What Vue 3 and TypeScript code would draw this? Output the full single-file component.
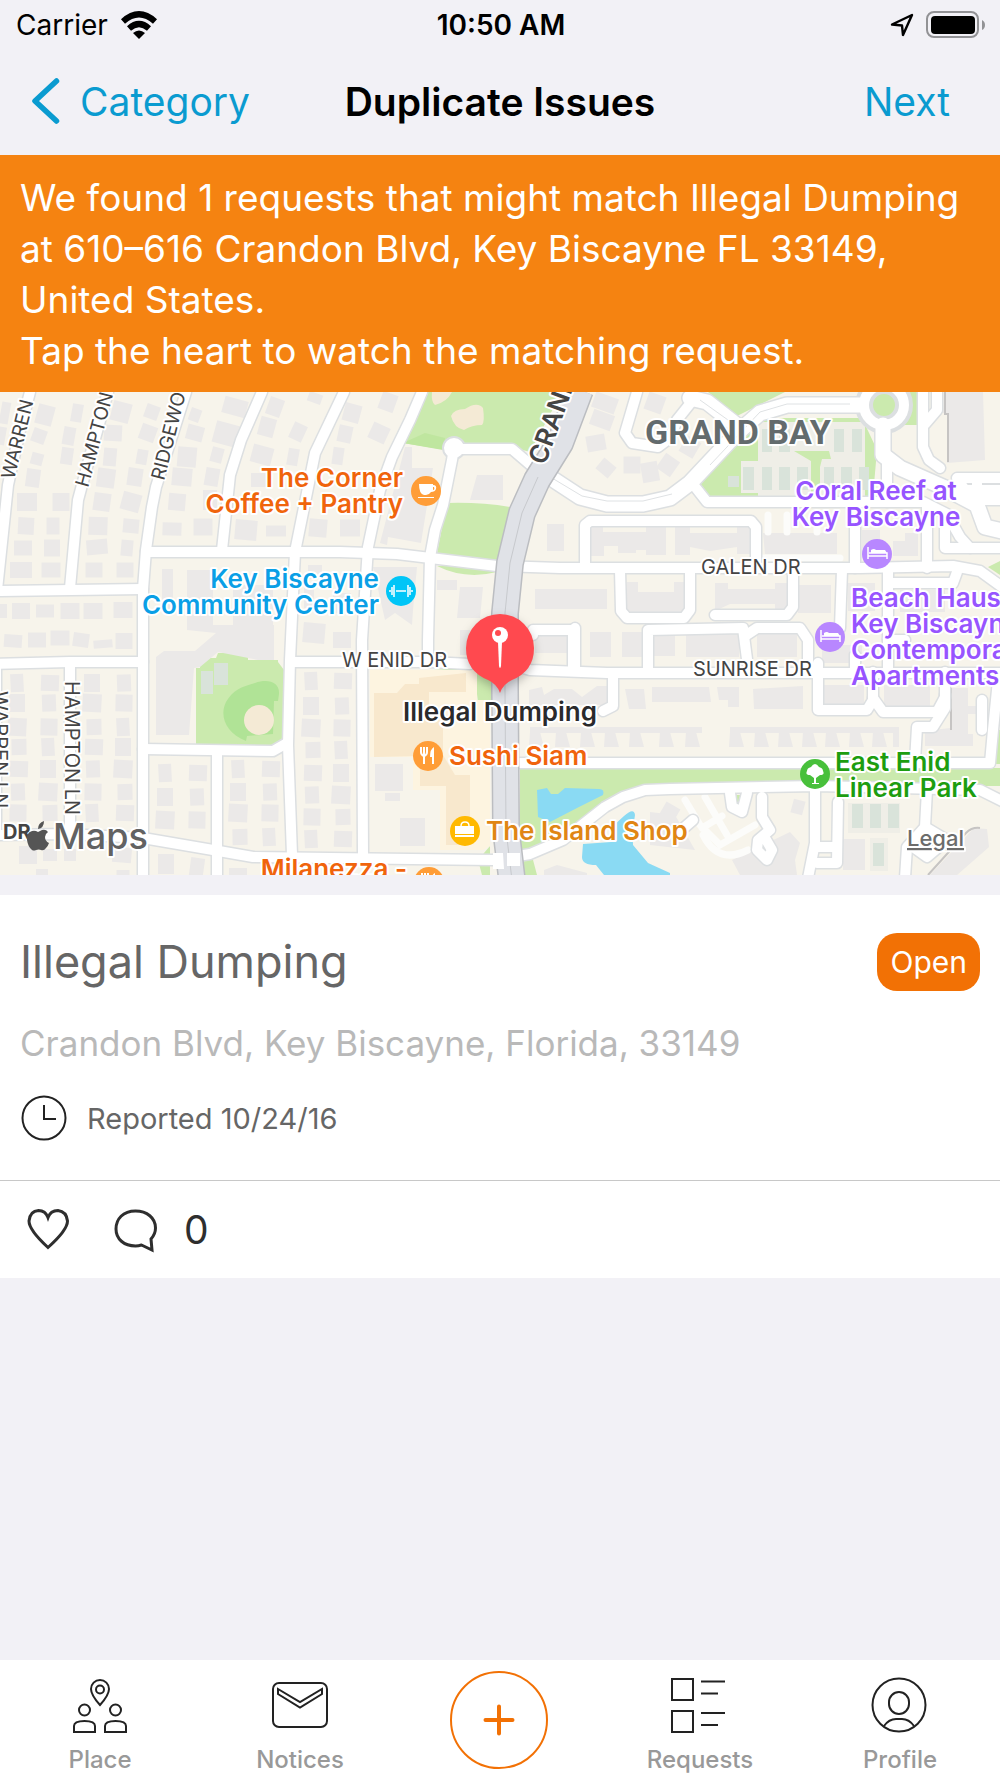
<script setup lang="ts">
import { ref } from 'vue'

type House = [x: number, y: number, w: number, h: number, tilt: number]

interface PlaceLabel {
  lines: string[]
  x: number
  y: number
  anchor: 'start' | 'middle' | 'end'
  kind: string
}

const watching = ref(false)

// Detached houses: centre, size and tilt.
const houses: House[] = [
  [45, 415, 17, 20, 15], [39, 436, 14, 14, 20], [37, 459, 12, 12, 15], [33, 478, 14, 18, 8], [27, 502, 20, 18, 0],
  [26, 526, 16, 17, 3], [23, 548, 18, 15, 0], [21, 570, 22, 16, 0], [77, 413, 11, 18, 10], [69, 436, 12, 18, 10],
  [67, 456, 12, 17, 8], [61, 502, 17, 18, 0], [53, 526, 13, 17, 0], [52, 548, 16, 17, 0], [51, 570, 19, 15, 0],
  [121, 412, 19, 20, 15], [113, 433, 18, 16, 3], [110, 457, 13, 18, 5], [106, 478, 18, 19, 8], [102, 502, 17, 18, 8],
  [98, 526, 19, 18, 2], [97, 547, 21, 15, -5], [94, 570, 17, 15, 0], [152, 412, 14, 14, 20], [148, 433, 16, 16, 20],
  [142, 457, 11, 15, 10], [135, 477, 15, 18, 8], [131, 502, 19, 18, 15], [131, 526, 16, 14, 5], [127, 548, 12, 16, 5],
  [125, 570, 17, 15, 0], [195, 415, 11, 13, 20], [226, 434, 24, 22, 15], [195, 433, 17, 15, 15], [187, 457, 19, 20, 5],
  [217, 455, 12, 15, 15], [182, 477, 20, 18, 5], [212, 477, 14, 18, 10], [177, 502, 17, 17, 5], [210, 500, 14, 20, 0],
  [172, 529, 19, 13, 2], [203, 527, 19, 17, 0], [235, 407, 24, 17, 15], [275, 407, 15, 18, 20], [267, 427, 16, 19, 15],
  [298, 432, 14, 17, 25], [262, 455, 21, 18, 15], [293, 457, 11, 17, 10], [260, 480, 18, 14, 0], [246, 530, 22, 20, 5],
  [276, 531, 20, 11, 0], [318, 528, 18, 18, 5], [315, 398, 14, 10, 20], [352, 413, 17, 18, 15], [388, 402, 16, 18, 20],
  [345, 434, 14, 17, 12], [379, 433, 18, 17, 25], [338, 456, 11, 17, 8], [350, 528, 20, 17, 0], [5, 413, 9, 22, 10],
  [2, 436, 7, 18, 10], [2, 611, 10, 14, 0], [21, 611, 18, 16, 0], [45, 611, 18, 13, 0], [70, 611, 19, 16, 0],
  [93, 611, 19, 16, 0], [123, 610, 19, 16, 0], [13, 641, 18, 13, 4], [37, 640, 18, 15, 0], [60, 638, 19, 15, 0],
  [81, 640, 16, 14, 8], [103, 644, 19, 8, -5], [124, 641, 17, 16, 0], [28, 855, 18, 18, 0], [50, 855, 14, 12, 0],
  [70, 855, 12, 12, 0], [122, 855, 19, 15, 5], [123, 873, 13, 6, 0], [42, 873, 12, 8, 0], [166, 864, 16, 20, 0],
  [197, 867, 14, 18, 8], [238, 873, 18, 10, 0], [315, 572, 14, 14, 0], [309, 597, 10, 22, 0], [314, 633, 22, 20, 5],
  [342, 640, 18, 16, 0], [342, 603, 18, 20, 0], [605, 403, 24, 16, 20], [602, 420, 22, 16, 20], [596, 443, 19, 16, -10],
  [606, 468, 16, 14, 40], [632, 465, 17, 17, 0], [650, 472, 17, 20, -10], [655, 403, 18, 18, 20], [668, 465, 17, 18, 35],
  [690, 447, 16, 18, 30], [798, 807, 12, 14, 15], [668, 815, 16, 22, 30],
]

// Regular blocks of lots, given by their column and row centres.
const blocks = [
  { cols: [18, 49, 93, 124], rows: [683, 703, 727, 747, 769, 792, 813] },
  { cols: [166, 197], rows: [773, 797, 820] },
  { cols: [239, 270], rows: [769, 792, 813, 837] },
  { cols: [312, 342], rows: [681, 706, 728, 750, 773, 795, 817, 839] },
]
for (const { cols, rows } of blocks) {
  cols.forEach((x, c) => rows.forEach((y, r) => {
    const k = (c * 5 + r * 3) % 7
    houses.push([x + (k % 3) - 1, y, 13 + k, 18 - (k % 3), k - 3])
  }))
}

// Row of carports beside the linear park.
const teeth = [530, 556, 581, 605, 630, 660, 686, 730, 755, 779, 803, 826, 850, 873]
  .map((x) => `M${x} 732h10l4 15h-15z`).join('')

const roads = [
  'M30 392L20 430 8 485-3 590', 'M108 392L82 485 78 500 70 588', 'M186 392L156 487 152 507 146 550 143 589V875',
  'M262 392L241 440 230 475 222 550', 'M344 392L315 453 295 552 290 660 288 745 292 855',
  'M146 552H340L397 554 497 566 560 568H860L953 566 980 571 1002 587', 'M-5 591L143 589', 'M-5 664L70 662H143',
  'M292 662H430L470 664', 'M143 749L273 751 287 743', 'M217 752V878', 'M-4 668V830', 'M70 664V832',
  'M-5 835L67 834 143 838 213 850 253 857 330 858 493 860 530 854 563 840 605 807 623 797 645 790 670 789 817 786 980 790 1004 802',
  'M422 392L410 420 392 457 380 490 368 547 362 640 363 855',
  'M454 448L452 460 443 505 435 530 430 557 428 640V662', 'M454 449H512L533 467',
  'M520 667L530 670 607 673H1000', 'M585 566V525L590 521H751L756 527V566',
  'M620 570L621 611 627 618H684L690 610V570', 'M793 570V607L787 615H715', 'M842 570L840 628',
  'M855 505V568', 'M927 505V568', 'M888 570V672', 'M893 583H953L957 572', 'M696 488L707 502H923L947 514 960 537 970 548H1000',
  'M945 515V548H970', 'M887 455V502', 'M533 635V630H573V670', 'M575 668V628', 'M648 670V630L743 628 748 667',
  'M748 634L757 628H800L808 640V668', 'M818 663V710H867L873 700V672', 'M873 698L883 712H937L945 697V672',
  'M945 695V708L933 727H917L915 762', 'M520 763H990L993 730 998 680', 'M613 675V706L603 711',
  'M815 790V843L808 878', 'M838 802L837 863H817', 'M817 847H836', 'M730 793L732 807 742 812 747 793',
  'M762 797V817L770 830 758 840 757 850 767 860 772 850 765 838', 'M927 790L925 827 907 847 905 878',
  'M925 827L947 840 927 857 913 847', 'M693 820L678 833', 'M923 392V447L929 460 940 468', 'M937 392V410L925 424',
  'M637 392L625 433 632 443 658 447 670 438 677 420 693 400', 'M1002 478H957L965 490H1002M977 478V500H1002',
  'M982 700V730', 'M888 640H905M855 655V672',
]

const wideRoads = [
  'M548 476L580 497 607 504H643L670 498 690 483 737 433 760 413 787 405H860',
  'M690 398L707 402 735 424', 'M883 425V455L900 468 943 487 977 505 985 527 1002 531',
]

const labels: PlaceLabel[] = [
  { lines: ['The Corner', 'Coffee + Pantry'], x: 403, y: 487, anchor: 'end', kind: 'food' },
  { lines: ['Key Biscayne', 'Community Center'], x: 379, y: 588, anchor: 'end', kind: 'gym' },
  { lines: ['Coral Reef at', 'Key Biscayne'], x: 876, y: 500, anchor: 'middle', kind: 'hotel' },
  { lines: ['Beach Haus', 'Key Biscayne', 'Contemporary', 'Apartments'], x: 851, y: 607, anchor: 'start', kind: 'hotel' },
  { lines: ['East Enid', 'Linear Park'], x: 835, y: 771, anchor: 'start', kind: 'park' },
  { lines: ['Sushi Siam'], x: 449, y: 765, anchor: 'start', kind: 'food' },
  { lines: ['The Island Shop'], x: 486, y: 840, anchor: 'start', kind: 'shop' },
  { lines: ['Milanezza -'], x: 407, y: 878, anchor: 'end', kind: 'food' },
  { lines: ['Illegal Dumping'], x: 500, y: 721, anchor: 'middle', kind: 'issue' },
]
</script>

<template>
  <div class="app">
    <div class="status">
      <div class="carrier">
        <span>Carrier</span>
        <svg width="38" height="28" viewBox="0 0 38 28" aria-hidden="true">
          <g fill="none" stroke="#000" stroke-width="6">
            <path d="M3 10.5Q19-4 35 10.5" />
            <path d="M9 17.5Q19 8.5 29 17.5" />
          </g>
          <path d="M13 22Q19 17 25 22L19 28z" />
        </svg>
      </div>
      <time>10:50 AM</time>
      <div class="power">
        <svg width="24" height="24" viewBox="0 0 24 24" aria-hidden="true">
          <path d="M2 11.5L22 2 13 22 12 12.5z" fill="none" stroke="#000" stroke-width="2.4" stroke-linejoin="round" />
        </svg>
        <svg width="60" height="28" viewBox="0 0 60 28" aria-hidden="true">
          <rect x="1" y="1" width="51" height="25" rx="7" fill="none" stroke="#929295" stroke-width="2" />
          <rect x="5" y="5" width="44" height="18" rx="4" />
          <path d="M56 9q3 1.5 3 5t-3 5z" fill="#929295" />
        </svg>
      </div>
    </div>

    <header class="nav">
      <button type="button" class="back">
        <svg width="28" height="46" viewBox="0 0 28 46" aria-hidden="true">
          <path d="M24.500 3L3 23l21.500 20" fill="none" stroke="#0a9bd0" stroke-width="5.500" stroke-linecap="round" stroke-linejoin="round" />
        </svg>
        Category
      </button>
      <h1>Duplicate Issues</h1>
      <button type="button" class="next">Next</button>
    </header>

    <p class="banner">
      We found 1 requests that might match Illegal Dumping at 610–616 Crandon Blvd, Key Biscayne FL 33149, United States.<br />
      Tap the heart to watch the matching request.
    </p>

    <svg class="map" viewBox="0 392 1000 483" preserveAspectRatio="xMidYMid slice" role="group" aria-label="Map">
      <rect x="0" y="392" width="1000" height="483" fill="#f7f4eb" />

      <g fill="#cbeaae">
        <path d="M427 392H562L530 452 512 447H454L440 449 403 443z" />
        <path d="M403 443L425 433 445 438 443 450z" fill="#bfe69f" />
        <path d="M447 503Q480 502 510 507L497 562 437 553z" />
        <path d="M437 566Q465 580 497 572V565z" />
        <path d="M196 668h4v-10h16l2-5h30v7h30v2l6 8v70l-11 6h-77z" />
        <path d="M708 392H785L745 412 737 416z" />
        <path d="M698 487L760 418H862L877 450 873 496H708z" />
        <path d="M903 392h15v33h-15z" />
        <path d="M520 768H1000V786H680Q640 784 620 795L570 833 520 854z" />
        <path d="M433 669l45-3h13v44h-12l-4-32-8-7zM462 720h9v30h-9zM478 860l12-14v29h-8zM520 862l12-6 5 19h-17z" />
        <path d="M996 730h4v34h-4zM988 567l12-6v14zM735 795h7l-4 12h-3z" />
      </g>
      <path d="M255 683c14-5 25 0 24 11l-1 7h-4l-1 33-26 2-1 5c-20-8-27-25-20-39 7-12 15-15 29-19z" fill="#b0e396" />
      <g fill="#f4ead5">
        <circle cx="259" cy="720" r="15" />
        <path d="M451 416q3-7 14-7 12-8 18-1 2 14-1 17-10 0-18 5-10-2-13-14zM432 392h20q-5 10-17 13-4-3-3-13z" />
      </g>
      <g fill="#efeee7">
        <path d="M758 422h107v74H758zM741 461h17v32h-17zM848 803h52v30h-52zM870 838h18v33h-18z" />
      </g>
      <path d="M794 451h35l2 8h-9l-2 8v28h-9v-34z" fill="#cbeaae" />
      <g fill="#d9e3da">
        <path d="M762 429h10v23h-10zM779 429h11v23h-11zM834 429h10v23h-10zM852 429h10v23h-10zM743 467h11v23h-11zM762 467h10v23h-10zM779 467h11v23h-11zM797 467h11v23h-11zM824 467h10v23h-10zM841 467h11v23h-11zM859 467h10v23h-10zM728 476h11v11h-11z" />
        <path d="M201 671h12v23h-12zM214 663h14v22h-14zM852 804h11v24h-11zM870 804h11v24h-11zM888 804h11v24h-11zM873 843h11v23h-11z" />
      </g>

      <path d="M370 670H477V700H490V846L483 850H440V790H413V757H370z" fill="#fdf4e0" />
      <path d="M374 693h23l8-9h14v-6l47-5v19h-37v15l14 18v30l12 20h15v70h-24v-59h-26v-30l-46 1z" fill="#f8e8cd" />

      <g fill="#8adaf3">
        <path d="M537 790l10-2 4 6h7l7-6 34 1q6 0 4 6l-26 13-27 14-12-5z" />
        <path d="M624 816q10-9 11-1-3 17-2 30l15 18 22 10v2H604l-8-10q-14 0-14-8l1-13 28-2 1-15z" />
      </g>

      <g fill="#ebe9e8">
        <rect
          v-for="([x, y, w, h, tilt], i) in houses"
          :key="i"
          :x="x - w / 2"
          :y="y - h / 2"
          :width="w"
          :height="h"
          :transform="`rotate(${tilt} ${x} ${y})`"
        />
        <path d="M187 570H213V625H274V660H258L218 652 200 667 194 668 189 735H156V657L164 651H195L216 633 187 630zM162 569h11v40h-11zM233 585h40v44h-40z" />
        <path d="M405 447h7v21h21l-12 75-33-6-1 8-7-2zM477 475h26v25h-33zM547 524h17v27h-17zM535 589h72v20h-72z" />
        <path d="M588 524h15v8h43v-8h20v31h-20v-5h-10v3h-18v-7h-14v10h-16zM675 524h15v9h47v-9h15v30h-15v-7l-27 4-20-4v8h-15zM763 533h74v21h-72z" />
        <path d="M862 530h18v25h-18zM905 533h13v23h-25v-15h12zM373 567h44l-4 43-1 15-17-12-10 7zM437 580h20v10h-20zM460 587h23l-3 31h-23z" />
        <path d="M627 582h11v10h36v-10h12v31H627zM715 583h13v6h47v-6h14v27h-14v-6h-45l-15 7zM798 585h33v28h-33zM848 583h27v28h-27zM900 590h45v22h-45zM460 630h24v25h-24z" />
        <path d="M535 635h41v18h-41zM590 632h21v25h-21zM622 632h21v25h-21zM654 634h21v22h-21zM686 632h53v25h-53zM757 632h40v25h-40zM822 645h40v18h-40z" />
        <path d="M529 690l13-3 2 8 10-6h18l10 8 15-11h14v19h-82zM625 689h19l2 20h-17zM652 687h57l2 15h-59zM717 687h22v20h-11v-7h-9zM753 689l50-3v23h-49zM822 685h42v24h-42zM884 685h46v24h-46z" />
        <path d="M950 688h18v18h13v8h-13v20h5v12h-48v-15l25-3zM530 727h172v6H530zM730 727h169v20h-6v-14H730z" />
        <path :d="teeth" />
        <path d="M375 764h28v27h-28zM385 793h15v8h-15zM400 818h25v28h-25zM843 839h22v31h-22zM732 860l58-28 10 11-5 17 2 15h-57zM544 870l13-5 30 8v4h-43zM650 812l25 3 20 35-45-5z" />
        <path d="M930 875l44-47 13 1 2 18-32 28zM944 392h39l2 68-38 3v-50h-4z" />
      </g>
      <path d="M945 392v22h3v48M928 875l38-42q6-6 14-5M951 688v42" fill="none" stroke="#c6c4c3" stroke-width="2" />

      <g class="drives">
        <path d="M768 515v17M787 515v17M817 515v17M760 558h80M685 800l15 25 20 20 35-20M705 797l22 38M702 828l20-12M703 835q15 30 45 15" />
      </g>

      <g class="casing">
        <path v-for="(d, i) in roads" :key="i" :d="d" />
      </g>
      <g class="casing wide">
        <path v-for="(d, i) in wideRoads" :key="i" :d="d" />
        <circle cx="884" cy="405" r="20" fill="#cbeaae" />
      </g>
      <circle cx="454" cy="448" r="11" fill="#fff" stroke="#dcdfe1" stroke-width="2" />
      <g class="paving">
        <path v-for="(d, i) in roads" :key="i" :d="d" />
      </g>
      <g class="paving wide">
        <path v-for="(d, i) in wideRoads" :key="i" :d="d" />
        <circle class="ring" cx="884" cy="405" r="20" />
      </g>
      <path d="M552 478L582 496 607 501H643L672 494M700 400l28 20M710 465L760 412 787 404H850" fill="none" stroke="#dfe2e4" stroke-width="1" />

      <g fill="none" stroke-linejoin="round">
        <path class="highway-edge" d="M580 390L560 443 537 480 522 513 510 563 505 613V690L506 830 512 880" />
        <path class="highway" d="M580 390L560 443 537 480 522 513 510 563 505 613V690L506 830 512 880" />
        <path d="M538 477L522 513 510 563 505 613V690L506 830 512 880" stroke="#c7c9cd" stroke-width="1" />
      </g>
      <path d="M493 853h10l1 16h-11zM507 853h13v13h-13z" fill="#fff" />

      <g class="street slanted">
        <text transform="translate(14 480) rotate(-76)">WARREN</text>
        <text transform="translate(88 488) rotate(-75)">HAMPTON</text>
        <text transform="translate(164 481) rotate(-76)">RIDGEWOOD</text>
      </g>
      <g class="street">
        <text transform="translate(65 681) rotate(90)">HAMPTON LN</text>
        <text transform="translate(-7 691) rotate(90)">WARREN LN</text>
        <text x="342" y="667">W ENID DR</text>
        <text x="701" y="574">GALEN DR</text>
        <text x="693" y="676">SUNRISE DR</text>
      </g>
      <text class="street main" transform="translate(545 466) rotate(-70)">CRANDON</text>
      <text class="street dr" x="3" y="839">DR</text>
      <text class="district" x="645" y="444">GRAND BAY</text>

      <g transform="translate(426 491)">
        <circle r="15" fill="#ff9d37" />
        <path d="M-7-7H7v1q4 0 3 4-1 3-5 3-2 3-5 3h-2q-5-1-5-11zM7-4v3q2 0 1-3zM-8 6H8v1H-8z" fill="#fff" fill-rule="evenodd" />
      </g>
      <g transform="translate(401 591)">
        <circle r="15" fill="#00c5f7" />
        <path d="M-5 0H5M-7-6V6M7-6V6M-9-4V4M9-4V4M-11-1V1M11-1V1" stroke="#fff" stroke-width="1.500" />
      </g>
      <g v-for="[x, y] in [[877, 554], [830, 637]]" :key="x" :transform="`translate(${x} ${y})`">
        <circle r="15" fill="#b887ff" />
        <path d="M-9-7V5M-9 2H10V5M-8-1H10V2" fill="none" stroke="#fff" stroke-width="1.500" />
        <path d="M-6-4q3-2 5 0H8l2 3H-6z" fill="#fff" />
      </g>
      <g v-for="[x, y] in [[428, 756], [429, 882]]" :key="y" :transform="`translate(${x} ${y})`">
        <circle r="15" fill="#ff9d37" />
        <path d="M-7-9v5q0 3 3 4M-1-9v5q0 3-3 4M-4-9V8" fill="none" stroke="#fff" stroke-width="2" />
        <path d="M6-9V8H4V1H2q0-8 4-10z" fill="#fff" />
      </g>
      <g transform="translate(465 831)">
        <circle r="15" fill="#ffb900" />
        <path d="M-10-5H9V3H-10zM-10 4H9V6H-10z" fill="#fff" />
        <path d="M-4-5q0-4 4-4t4 4" fill="none" stroke="#fff" stroke-width="1.500" />
      </g>
      <g transform="translate(815 774)">
        <circle r="15" fill="#48c03b" />
        <path d="M-5 1Q-10 1-8-3-8-6-4-7 0-13 4-7 8-6 8-3 10 1 5 1L1 4V9H4V10H-3V9H-1V4z" fill="#fff" />
      </g>
      <g class="pin">
        <path d="M500 693q-3-9-12-13-22-9-22-32a34 34 0 0 1 68 0q0 23-22 32-9 4-12 13z" fill="#ff494f" />
        <path d="M498 642h4l-1 24q-1 4-2 0z" fill="#fff" />
        <circle cx="500" cy="635" r="8" fill="#fff" />
        <circle cx="498" cy="633" r="3" fill="#ff494f" />
      </g>

      <text
        v-for="label in labels"
        :key="label.lines[0]"
        class="place"
        :class="label.kind"
        :text-anchor="label.anchor"
      >
        <tspan v-for="(line, i) in label.lines" :key="line" :x="label.x" :y="label.y + i * 26">{{ line }}</tspan>
      </text>

      <path d="M38 832q-3-2-6-1-6 2-5 9 1 7 5 10 2 1 4 0 3-1 5 0 3 1 5-2 2-2 3-5-4-2-4-6 0-3 3-5-2-3-6-2-2 1-4 2zM38 829q0-6 6-8 0 7-6 8z" fill="#555" />
      <text class="brand" x="53" y="849">Maps</text>
      <a href="#legal"><text class="legal" x="907" y="846">Legal</text></a>
    </svg>

    <main class="card">
      <div class="summary">
        <div class="heading">
          <h2>Illegal Dumping</h2>
          <span class="badge">Open</span>
        </div>
        <p class="address">Crandon Blvd, Key Biscayne, Florida, 33149</p>
        <p class="reported">
          <svg width="46" height="46" viewBox="0 0 46 46" aria-hidden="true">
            <g fill="none" stroke="#222" stroke-width="2">
              <circle cx="24" cy="23" r="21.500" />
              <path d="M24 10V24H36" />
            </g>
          </svg>
          Reported 10/24/16
        </p>
      </div>
      <div class="actions">
        <button type="button" aria-label="Watch request" :aria-pressed="watching" @click="watching = !watching">
          <svg width="46" height="44" viewBox="0 0 46 44" aria-hidden="true">
            <path d="M22 39.500Q3 22 3 13 4 3 12.500 2.500q7 0 9.500 7 2.500-7 10-7 8.500 1 9.500 10.500 0 9-19.500 26.500z" :fill="watching ? '#f47d11' : 'none'" stroke="#2e2e2e" stroke-width="3" />
          </svg>
        </button>
        <button type="button" class="comments" aria-label="Comments">
          <svg width="46" height="44" viewBox="0 0 46 44" aria-hidden="true">
            <path d="M23.500 3C11 3 4 11 4 21s8 17 19.500 17q3 0 6-1l10.500 5-1-11q4.500-5 4.500-11C43.500 10 35 3 23.500 3z" fill="none" stroke="#2e2e2e" stroke-width="3" />
          </svg>
          0
        </button>
      </div>
    </main>

    <nav class="tabs">
      <a href="#place">
        <svg width="56" height="56" viewBox="0 0 56 56" aria-hidden="true">
          <g fill="none" stroke="#222" stroke-width="2">
            <path d="M28 27Q19 17 19 11a9 9 0 0 1 18 0q0 6-9 16z" />
            <circle cx="28" cy="11.500" r="4" />
            <circle cx="12.500" cy="32" r="5.500" />
            <circle cx="43.500" cy="32" r="5.500" />
            <path d="M2 54V48q0-5 10.500-5T23 48v6zM33 54V48q0-5 10.500-5T54 48v6z" />
          </g>
        </svg>
        Place
      </a>
      <a href="#notices">
        <svg width="56" height="56" viewBox="0 0 56 56" aria-hidden="true">
          <g fill="none" stroke="#222" stroke-width="2">
            <rect x="1" y="5" width="54" height="44" rx="6" />
            <path d="M6 11L28 24 50 11V16L28 29.500 6 16z" />
          </g>
        </svg>
        Notices
      </a>
      <button type="button" class="add" aria-label="New request">
        <svg width="100" height="100" viewBox="0 0 100 100" aria-hidden="true">
          <g fill="none" stroke="#f27105">
            <circle cx="49" cy="50" r="48" stroke-width="2" />
            <path d="M35.500 50h27M49 36.500v27" stroke-width="4" stroke-linecap="round" />
          </g>
        </svg>
      </button>
      <a href="#requests">
        <svg width="56" height="56" viewBox="0 0 56 56" aria-hidden="true">
          <path d="M0 1H21V22H0zM0 33H21V54H0zM29 3.500H53M29 15.500H46M29 35H53M29 47H46" fill="none" stroke="#222" stroke-width="2" />
        </svg>
        Requests
      </a>
      <a href="#profile">
        <svg width="56" height="56" viewBox="0 0 56 56" aria-hidden="true">
          <g fill="none" stroke="#222" stroke-width="2">
            <circle cx="27" cy="27" r="26.500" />
            <rect x="17" y="14" width="20" height="22" rx="10" />
            <path d="M12 48q5-7 12-7h6q7 0 12 7" />
          </g>
        </svg>
        Profile
      </a>
    </nav>
  </div>
</template>

<style>
body {
  margin: 0;
  background: #f2f1f6;
}
</style>

<style scoped>
.app {
  display: flex;
  flex-direction: column;
  min-height: 100vh;
  background: #f2f1f6;
  color: #000;
  font-family: Inter, "Liberation Sans", sans-serif;
}

svg {
  display: block;
  flex: none;
  overflow: visible;
}

h1,
h2,
p {
  margin: 0;
}

button {
  padding: 0;
  border: 0;
  background: none;
  color: inherit;
  font: inherit;
  cursor: pointer;
}

.status,
.nav {
  display: grid;
  grid-template-columns: 1fr auto 1fr;
  align-items: center;
}

.status {
  height: 50px;
  padding: 0 14px 0 16px;
  font-size: 28px;
}

.status time {
  font-weight: 600;
}

.carrier,
.power {
  display: flex;
  align-items: center;
  gap: 12px;
}

.power {
  justify-content: flex-end;
}

.nav {
  height: 105px;
  padding: 0 32px 3px;
  box-sizing: border-box;
  font-size: 39px;
}

.back {
  display: flex;
  align-items: center;
  gap: 20px;
}

.back,
.next {
  color: #0a9bd0;
}

.next {
  justify-self: end;
  padding-right: 18px;
}

.nav h1 {
  font-size: 39px;
  font-weight: 600;
}

.banner {
  padding: 17px 20px 16px;
  background: #f58311;
  color: #fff;
  font-size: 37px;
  line-height: 51px;
}

.map {
  width: 100%;
  height: auto;
  overflow: hidden;
}

.drives {
  fill: none;
  stroke: #fcfcfa;
  stroke-width: 7;
  stroke-linecap: round;
}

.casing,
.paving {
  fill: none;
  stroke-linejoin: round;
  stroke-linecap: round;
}

.casing {
  stroke: #dcdfe1;
  stroke-width: 13;
}

.casing.wide {
  stroke-width: 18;
}

.paving {
  stroke: #fff;
  stroke-width: 10;
}

.paving.wide {
  stroke-width: 15;
}

.ring {
  stroke-width: 10;
}

.highway-edge {
  stroke: #bbbdc1;
  stroke-width: 28;
}

.highway {
  stroke: #e0e2e7;
  stroke-width: 25;
}

.map text {
  paint-order: stroke;
  stroke: #fff;
  stroke-width: 4px;
  stroke-linejoin: round;
}

.street {
  fill: #444;
  font-size: 20px;
}

.street.slanted {
  font-size: 19px;
}

.street.main {
  font-size: 26px;
  font-weight: 600;
}

.street.dr {
  font-weight: 700;
}

.district {
  fill: #636b6d;
  font-family: Roboto, sans-serif;
  font-size: 34px;
  font-weight: 700;
}

.place {
  font-size: 26px;
  font-weight: 600;
}

.food {
  fill: #f0640c;
}

.gym {
  fill: #0a9fe6;
}

.hotel {
  fill: #9754ff;
}

.park {
  fill: #1d9d10;
}

.shop {
  fill: #e08614;
}

.issue {
  fill: #2a2a2c;
}

.pin {
  filter: drop-shadow(0 4px 5px rgb(0 0 0 / 25%));
}

.brand {
  fill: #626262;
  font-size: 36px;
  font-weight: 500;
}

.legal {
  fill: #6c6c6c;
  font-size: 22px;
  font-weight: 500;
  text-decoration: underline;
}

.card {
  margin-top: 20px;
  background: #fff;
}

.summary {
  display: flex;
  flex-direction: column;
  padding: 38px 20px 39px;
  border-bottom: 1px solid #c8c8c8;
}

.heading {
  display: flex;
  align-items: center;
  justify-content: space-between;
}

.heading h2 {
  color: #666;
  font-size: 45px;
  font-weight: 400;
  line-height: 58px;
}

.badge {
  padding: 0 13px;
  border-radius: 20px;
  background: #f27105;
  color: #fff;
  font-size: 30px;
  line-height: 58px;
}

.address {
  margin-top: 28px;
  color: #b9b9b9;
  font-size: 35px;
  line-height: 48px;
}

.reported {
  display: flex;
  align-items: center;
  gap: 21px;
  margin-top: 28px;
  color: #666;
  font-size: 29px;
}

.actions {
  display: flex;
  align-items: center;
  gap: 40px;
  height: 97px;
  padding: 0 26px;
  color: #2e2e2e;
  font-size: 39px;
}

.comments {
  display: flex;
  align-items: center;
  gap: 26px;
}

.tabs {
  display: flex;
  height: 118px;
  margin-top: auto;
  background: #fff;
}

.tabs a,
.add {
  display: flex;
  flex: 1;
  flex-direction: column;
  align-items: center;
  color: #999;
  font-size: 24px;
  font-weight: 500;
  line-height: 28px;
  text-decoration: none;
}

.tabs a {
  gap: 12px;
  padding-top: 18px;
}

.add {
  padding-top: 10px;
}
</style>
